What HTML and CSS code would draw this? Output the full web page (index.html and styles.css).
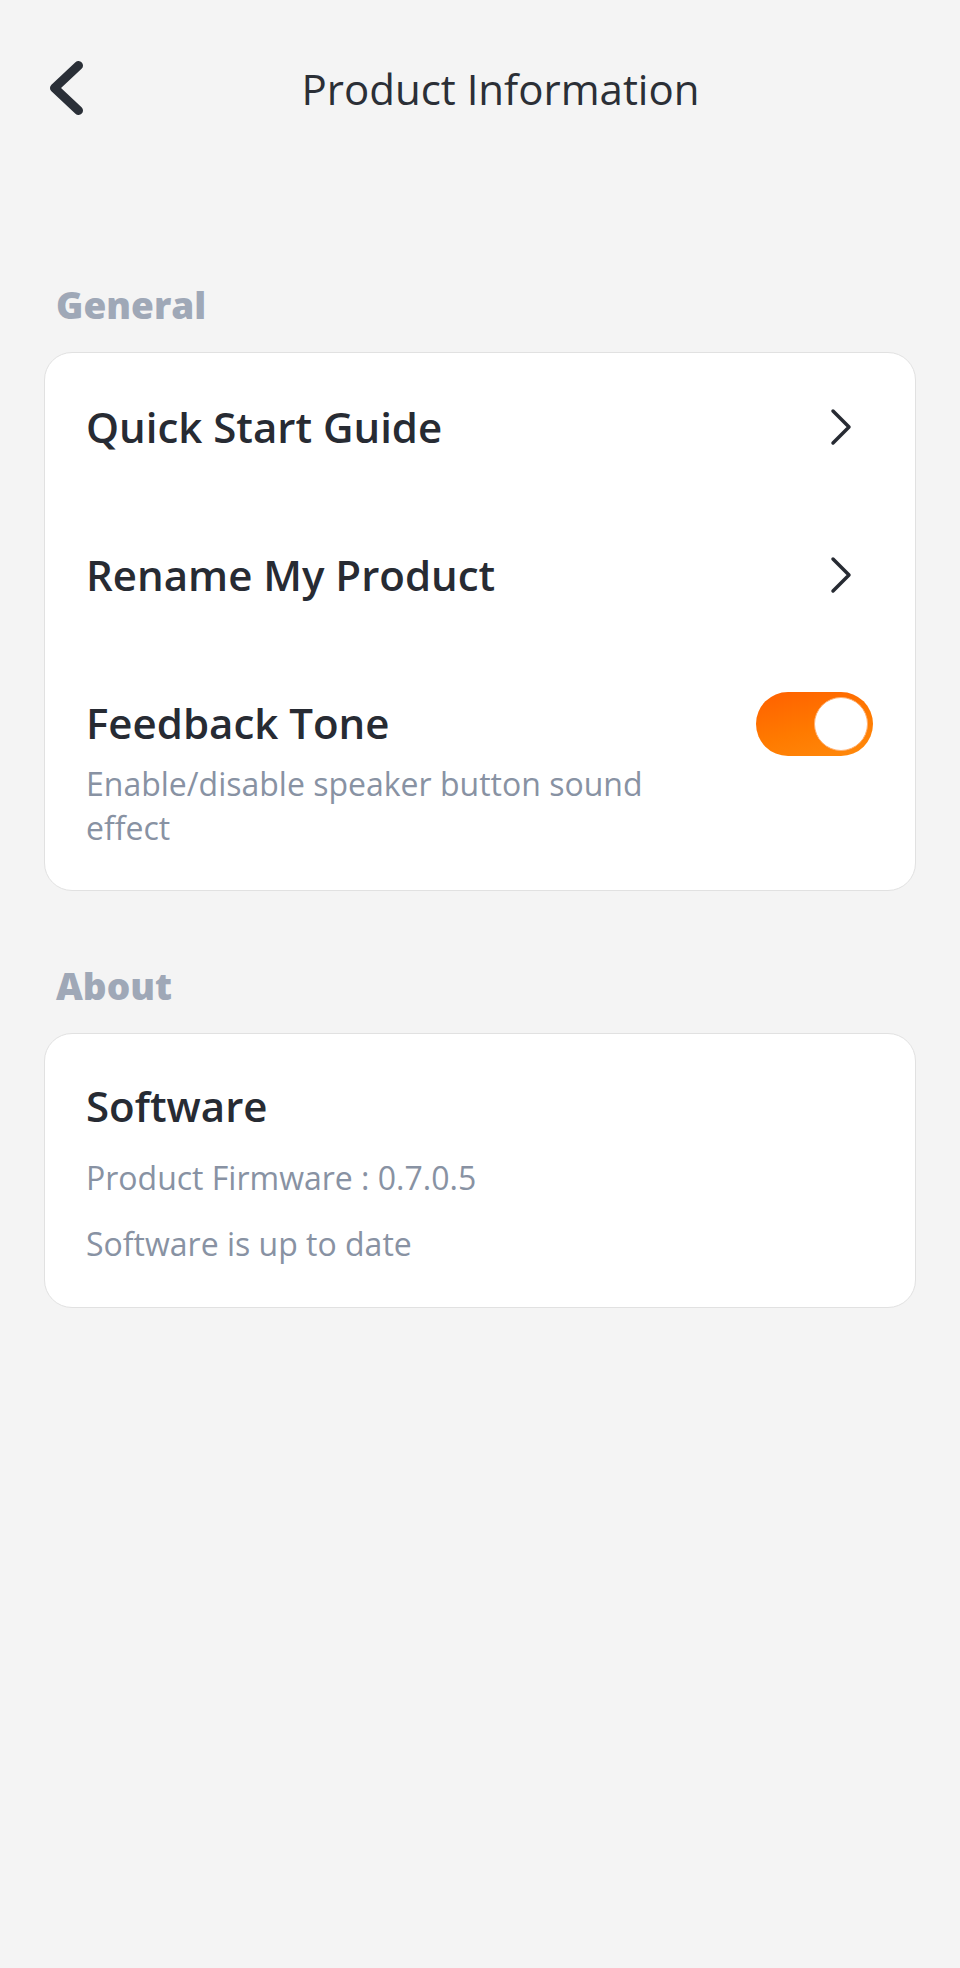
FILE: index.html
```html
<!DOCTYPE html>
<html lang="en">
<head>
    <meta charset="UTF-8">
    <meta name="viewport" content="width=device-width, initial-scale=1.0">
    <title>Product Information</title>
    <link rel="stylesheet" href="styles.css">
</head>
<body>

<div class="screen">
    <!-- Top bar -->
    <header class="topbar">
        <button class="back" type="button" aria-label="Back">
            <svg width="41" height="57" viewBox="0 0 41 57">
                <path d="M34.5 5.5 L10.5 28 L34.5 50.5" fill="none" stroke="#2a2f37" stroke-width="9" stroke-linecap="round" stroke-linejoin="round"/>
            </svg>
        </button>
        <h1 class="title">Product Information</h1>
    </header>

    <!-- General -->
    <section class="group group-general">
        <h2 class="group-label">General</h2>
        <div class="card">
            <div class="row">
                <span class="row-title">Quick Start Guide</span>
                <svg class="chev" width="24" height="40" viewBox="0 0 24 40">
                    <path d="M4 4 L20 20 L4 36" fill="none" stroke="#272b33" stroke-width="3.5" stroke-linecap="round" stroke-linejoin="round"/>
                </svg>
            </div>
            <div class="row">
                <span class="row-title">Rename My Product</span>
                <svg class="chev" width="24" height="40" viewBox="0 0 24 40">
                    <path d="M4 4 L20 20 L4 36" fill="none" stroke="#272b33" stroke-width="3.5" stroke-linecap="round" stroke-linejoin="round"/>
                </svg>
            </div>
            <div class="row row-toggle">
                <div class="row-text">
                    <span class="row-title">Feedback Tone</span>
                    <p class="row-desc">Enable/disable speaker button sound effect</p>
                </div>
                <span class="switch on"><span class="knob"></span></span>
            </div>
        </div>
    </section>

    <!-- About -->
    <section class="group group-about">
        <h2 class="group-label">About</h2>
        <div class="card card-info">
            <div class="row-title">Software</div>
            <p class="info-line">Product Firmware : 0.7.0.5</p>
            <p class="info-line">Software is up to date</p>
        </div>
    </section>
</div>

</body>
</html>
```

FILE: styles.css
```css
body {
    font-family: 'Open Sans', 'Noto Sans', sans-serif;
    background-color: #f4f4f4;
    color: #272b33;
    margin: 0;
    padding: 0;
}
.screen {
    width: 960px;
    min-height: 1968px;
}

/* Top bar */
.topbar {
    display: flex;
    align-items: center;
    padding: 60px 44px 0;
}
.back {
    width: 41px;
    height: 57px;
    padding: 0;
    border: none;
    background: none;
    display: flex;
}
.title {
    flex: 1;
    margin: 0;
    text-align: center;
    font-size: 42px;
    line-height: 57px;
    font-weight: 400;
    color: #2b2f36;
}

/* Groups */
.group {
    padding: 0 44px;
}
.group-general {
    margin-top: 163px;
}
.group-about {
    margin-top: 70px;
}
.group-label {
    margin: 0 0 23px 12px;
    font-size: 37px;
    line-height: 49px;
    font-weight: 800;
    color: #9fa8b7;
}
.card {
    background-color: #fff;
    border: 1px solid #e1e1e1;
    border-radius: 28px;
}

/* Rows */
.row {
    display: flex;
    align-items: center;
    justify-content: space-between;
    padding: 45px 42px 46px 41px;
}
.row-title {
    font-size: 42px;
    line-height: 57px;
    font-weight: 600;
    color: #272b33;
}
.chev {
    margin-right: 20px;
}
.row-toggle {
    align-items: flex-start;
    padding-bottom: 40px;
}
.row-text {
    display: flex;
    flex-direction: column;
}
.row-desc {
    margin: 11px 0 0;
    max-width: 600px;
    font-size: 32px;
    line-height: 44px;
    color: #8892a3;
}

/* Switch */
.switch {
    width: 117px;
    height: 64px;
    box-sizing: border-box;
    padding: 5px;
    margin-top: -2px;
    border-radius: 32px;
    display: flex;
    background: #d5d8de;
}
.switch.on {
    justify-content: flex-end;
    background: linear-gradient(165deg, #ff6000 0%, #ff7a00 55%, #ff8a0c 100%);
}
.knob {
    width: 54px;
    height: 54px;
    box-sizing: border-box;
    border-radius: 50%;
    background: #fff;
    border: 1px solid #ffb070;
}

/* About card */
.card-info {
    padding: 43px 43px 41px 41px;
}
.info-line {
    margin: 22px 0 0;
    font-size: 32px;
    line-height: 44px;
    color: #8892a3;
}
```
